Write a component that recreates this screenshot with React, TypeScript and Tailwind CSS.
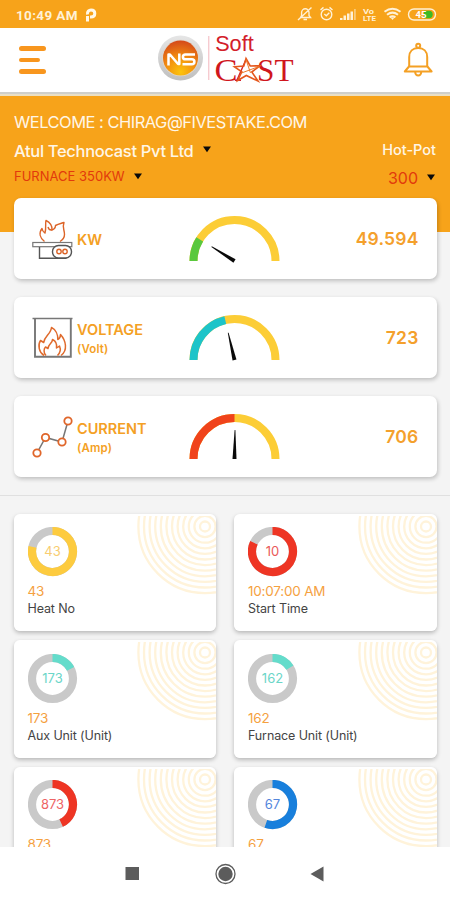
import React from "react";

const INTER = "font-['Inter','Liberation_Sans',sans-serif]";

function polar(cx: number, cy: number, r: number, deg: number) {
  const a = ((deg - 90) * Math.PI) / 180;
  return `${(cx + r * Math.cos(a)).toFixed(2)} ${(cy + r * Math.sin(a)).toFixed(2)}`;
}

function arc(cx: number, cy: number, r: number, from: number, to: number) {
  return `M${polar(cx, cy, r, from)}A${r} ${r} 0 ${to - from > 180 ? 1 : 0} 1 ${polar(cx, cy, r, to)}`;
}

function StatusIcons() {
  return (
    <svg className="overflow-visible" width="142" height="20" viewBox="0 0 142 20" fill="none" stroke="#fff1d6" strokeWidth="1.4">
      <path d="M3.500 13.500h10l-1.500-2V8.500a3.700 3.700 0 0 0-7.400 0v3zM6.500 15.500h3.500M1 16L14.500 3.500" />
      <circle cx="29.500" cy="10.500" r="5.300" />
      <path d="M27.300 10l2 1.800 3-3M23.500 6l3-2.600M35.500 6l-3-2.600" />
      <g stroke="none" fill="#fff1d6">
        <path d="M43 16v-2h2.500v2zM46.500 16v-4.500h2.500v4.500zM50 16v-6.500h2.500V16zM53.500 16V7.500H56V16z" />
        <path d="M57 16V5h1.800v11z" opacity=".5" />
        <text x="66" y="9.800" fontSize="8" fontWeight="700" fontFamily="Roboto" textLength="11" lengthAdjust="spacingAndGlyphs">Vo</text>
        <text x="66" y="16.500" fontSize="8" fontWeight="700" fontFamily="Roboto" textLength="13" lengthAdjust="spacingAndGlyphs">LTE</text>
      </g>
      <path d="M87.500 7.800q8-6 16 0M90 10.700q5.500-4.200 11 0M92.600 13.400q2.900-2.200 5.800 0" strokeWidth="2" />
      <path d="M93.500 13.500h4l-2 2.600z" fill="#fff1d6" stroke="none" />
      <rect x="111.500" y="5" width="27" height="11" rx="5.500" />
      <path d="M127 6.800h5a3.700 3.700 0 0 1 0 7.400h-5z" fill="#3dba24" stroke="none" />
      <text x="118.500" y="14" fontSize="9.500" fontWeight="700" fontFamily="Roboto" fill="#fff" stroke="none">45</text>
    </svg>
  );
}

function Logo() {
  return (
    <svg className="overflow-visible" width="138" height="52" viewBox="157 36 138 52">
      <defs>
        <linearGradient id="rim" x1="0" y1="0" x2="0" y2="1">
          <stop offset="0" stopColor="#e6e6e6" />
          <stop offset="1" stopColor="#bfbfbf" />
        </linearGradient>
        <radialGradient id="orb" cx=".5" cy=".9" r=".9">
          <stop offset="0" stopColor="#fcc40c" />
          <stop offset=".5" stopColor="#f28c10" />
          <stop offset="1" stopColor="#d4491a" />
        </radialGradient>
      </defs>
      <circle cx="180.500" cy="60" r="22.500" fill="url(#rim)" />
      <circle cx="180.500" cy="60" r="18.300" fill="#dfd6cc" />
      <circle cx="180.500" cy="60" r="17.500" fill="url(#orb)" />
      <g fill="none" stroke="#fff" strokeWidth="2.500" strokeLinejoin="round">
        <path d="M168.500 67.500V56.500h1.400l8.200 9.500h1.200V55.500" />
        <path d="M195 56.500h-9.500q-2.600 0-2.600 2.400t2.600 2.400h6.300q2.600 0 2.600 2.500t-2.600 2.500H182.500" />
      </g>
      <path d="M208.800 38v44" stroke="#f3b6bd" strokeWidth="1" />
      <text x="215.200" y="53.300" fontSize="22" fontFamily="Liberation Sans" fill="#d3202a" textLength="38.500" lengthAdjust="spacingAndGlyphs">Soft</text>
      <g fontSize="32" fontFamily="Liberation Serif" fill="#d0161d">
        <text x="214.500" y="83" textLength="23" lengthAdjust="spacingAndGlyphs">C</text>
        <text x="257" y="83" textLength="36.500" lengthAdjust="spacingAndGlyphs">ST</text>
      </g>
      <path d="M235 82.300h6M246 61.500l-9 20.500" stroke="#d3202a" strokeWidth="1.400" fill="none" />
      <path d="M246 60.500l4.200 7.500 9.800-.2-8.200 6.200 6.200 9-11.700-5.500-8.600 5 4.100-8.700-7.300-5 9.300-.7z" fill="none" stroke="#e5571c" strokeWidth="1.600" />
      <path d="M246 61.500l4.500 13.500M259 68.500l-17.500 6.500" stroke="#ec7a2a" strokeWidth="1" />
    </svg>
  );
}

function Bell() {
  return (
    <svg width="30" height="36" viewBox="0 0 30 36" fill="none" stroke="#f4a024" strokeWidth="2" strokeLinejoin="round">
      <circle cx="15.200" cy="3.700" r="2" />
      <path d="M6.200 24.500V15c0-5.500 3.600-9 9-9s9 3.500 9 9v9.500" />
      <path d="M6 24.500l-4.200 5h26.800l-4.200-5z" />
      <path d="M12.200 30a3 3.500 0 0 0 6 0" />
    </svg>
  );
}

function Caret() {
  return (
    <svg width="10" height="7" viewBox="0 0 10 7">
      <path d="M1 .5h8L5 6.300z" fill="#0a0a0a" />
    </svg>
  );
}

function PotIcon() {
  return (
    <svg width="42" height="42" viewBox="0 0 42 42" fill="none" strokeWidth="1.400">
      <path d="M12.500 23.500C8 20 6.500 15 10 10.500c.5 3 1.500 3.500 3 4.500C14.500 9 13 6 14 2.500c4 1.500 6.500 5.500 6 9.500 3-1 3.500-3 3.500-4.500 3-1.500 5.500-2 8.500-3-2 5 .5 7 .5 12 0 3.500-2 5.500-4.500 7" stroke="#dc6428" strokeLinejoin="round" />
      <path d="M20 12q-3 .500-4-3" stroke="#dc6428" />
      <rect x=".8" y="24.500" width="39" height="4.200" stroke="#777" strokeWidth="1.200" fill="#fff" />
      <path d="M7.500 29v11.200h27" stroke="#555" />
      <rect x="20.500" y="27.500" width="19" height="12.500" rx="6" stroke="#555" fill="#fff" />
      <circle cx="27" cy="33.500" r="2.200" stroke="#dc6428" />
      <circle cx="33" cy="33.500" r="2.200" stroke="#dc6428" />
    </svg>
  );
}

function FireBoxIcon() {
  return (
    <svg width="42" height="42" viewBox="0 0 42 42" fill="none">
      <path d="M.5 1.500h40" stroke="#777" strokeWidth="1.500" />
      <path d="M3 1.500v38.200h35.800V1.500" stroke="#777" strokeWidth="1.900" />
      <path d="M12 38.500C7 35.500 5.500 28 8.500 23.500l3.200 2C12.500 19 19 17 19.500 10.500c4 2 6.500 7 6.300 12 2.200-1 2.700-3 2.700-5 5.500 6 7.500 16 .5 21" stroke="#df6a2c" strokeWidth="1.500" strokeLinejoin="round" />
      <path d="M14 38.500c-3-3-2-7-.5-8.500l2.500 1.500c0-4.500 4.500-5 4.500-9 4 2 4.500 5.500 4 8.500l3-2c1.500 3.500.5 7-2 9.500" stroke="#df6a2c" strokeWidth="1.500" strokeLinejoin="round" />
    </svg>
  );
}

function LineChartIcon() {
  return (
    <svg width="42" height="42" viewBox="0 0 42 42" fill="#fff">
      <path d="M5 37L13.500 21.500 30 26 36 5" fill="none" stroke="#777" strokeWidth="1.500" />
      <g stroke="#e0662a" strokeWidth="1.800">
        <circle cx="5" cy="37" r="3.700" />
        <circle cx="13.500" cy="21.500" r="3.700" />
        <circle cx="30" cy="26" r="3.700" />
        <circle cx="36" cy="5" r="3.700" />
      </g>
    </svg>
  );
}

function Gauge({ split, color, needle, length }: { split: number; color: string; needle: number; length: number }) {
  return (
    <svg width="92" height="48" viewBox="0 0 92 48">
      <path d={arc(46.5, 46, 41, -90, 90)} fill="none" stroke="#fccd36" strokeWidth="8" />
      <path d={arc(46.5, 46, 41, -90, split)} fill="none" stroke={color} strokeWidth="8" />
      <path d={`M44.500 46L46.100 ${46 - length}h.8L48.500 46z`} fill="#0a0a0a" transform={`rotate(${needle} 46.500 46)`} />
    </svg>
  );
}

type MeterProps = {
  icon: React.ReactNode;
  name: string;
  unit?: string;
  value: string;
  gauge: React.ReactNode;
};

function Meter({ icon, name, unit, value, gauge }: MeterProps) {
  return (
    <div className="flex h-[81px] items-center rounded-[7px] bg-white px-[18px] shadow-[1px_2px_4px_rgba(0,0,0,0.22)]">
      <div className="w-[42px] shrink-0">{icon}</div>
      <div className="ml-[3.500px] w-[110.500px] shrink-0 pt-[2px] text-[#f4a024]">
        <div className="text-[14.500px] leading-[18px] font-semibold">{name}</div>
        {unit && <div className="mt-[2px] text-[11.500px] leading-[16px] font-semibold tracking-[0.150px]">{unit}</div>}
      </div>
      <div className="w-[92px] shrink-0">{gauge}</div>
      <div className="ml-auto pt-[2px] text-[17.500px] font-semibold tracking-[0.200px] text-[#f4a02c]">{value}</div>
    </div>
  );
}

function Rings() {
  return (
    <svg className="absolute right-0 top-[2px]" width="80" height="80" viewBox="0 0 80 80" fill="none" stroke="#fff3da" strokeWidth="2.300">
      {[5, 10.6, 16.2, 21.8, 27.4, 33, 38.6, 44.2, 49.8, 55.4, 61, 66.600].map((r) => (
        <circle key={r} cx="69" cy="10.500" r={r} />
      ))}
    </svg>
  );
}

type TileProps = { count: string; value: string; label: string; color: string; textColor: string; from: number; to: number };

function Tile({ count, value, label, color, textColor, from, to }: TileProps) {
  return (
    <div className="relative h-[117.500px] overflow-hidden rounded-[6px] bg-white pl-[14px] pt-[13.500px]">
      <Rings />
      <svg className="block" width="50" height="50" viewBox="0 0 50 50">
        <circle cx="24.500" cy="24.500" r="20.500" fill="none" stroke="#c9c9c9" strokeWidth="8.200" />
        <path d={arc(24.5, 24.5, 20.5, from, to)} fill="none" stroke={color} strokeWidth="8.200" />
        <text x="24.500" y="29.200" textAnchor="middle" fontSize="13" fontFamily="Inter" fill={textColor}>
          {count}
        </text>
      </svg>
      <div className="mt-[5px] text-[13.500px] leading-[18px] tracking-[-0.200px] text-[#f5a13f]">{value}</div>
      <div className="text-[12.500px] leading-[18px] tracking-[-0.120px] text-[#444]">{label}</div>
    </div>
  );
}

const tiles: TileProps[] = [
  { count: "43", value: "43", label: "Heat No", color: "#fdcb3f", textColor: "#f8cd70", from: 0, to: 283 },
  { count: "10", value: "10:07:00 AM", label: "Start Time", color: "#ee3524", textColor: "#ea5a5a", from: 0, to: 295 },
  { count: "173", value: "173", label: "Aux Unit (Unit)", color: "#64dccb", textColor: "#6bd6c8", from: 0, to: 62 },
  { count: "162", value: "162", label: "Furnace Unit (Unit)", color: "#64dccb", textColor: "#6bd6c8", from: 0, to: 58 },
  { count: "873", value: "873", label: "", color: "#ee3524", textColor: "#ee6565", from: 0, to: 155 },
  { count: "67", value: "67", label: "", color: "#187fdc", textColor: "#5486dc", from: 0, to: 199 },
];

export default function App() {
  return (
    <div className={`flex h-[900px] w-[450px] flex-col overflow-hidden bg-[#f4f4f4] ${INTER}`}>
      <div className="flex h-[28px] shrink-0 items-center bg-[#f7a31a] pl-[16px] pr-[11px] text-[#fff1d6]">
        <span className="pt-[2px] font-['Roboto',sans-serif] text-[13.500px] font-bold tracking-[0.350px]">10:49 AM</span>
        <svg className="ml-[7px] mt-px" width="12" height="14" viewBox="0 0 12 14" fill="none" stroke="#fff8e8" strokeWidth="3">
          <path d="M2.500 13.500V8M2.500 6.500C2 3.500 4 2 6 2c2.400 0 3.800 1.500 3.800 3.500S8.300 9 6 9H5" />
        </svg>
        <div className="ml-auto">
          <StatusIcons />
        </div>
      </div>

      <header className="flex h-[64px] shrink-0 items-center justify-between bg-white pl-[19px] pr-[17px]">
        <div className="flex w-[124px] flex-col gap-[7px]">
          <div className="h-[4.500px] w-[27px] rounded-full bg-[#f8961e]" />
          <div className="h-[4.500px] w-[21px] rounded-full bg-[#f8961e]" />
          <div className="h-[4.500px] w-[27px] rounded-full bg-[#f8961e]" />
        </div>
        <div className="mr-auto ml-[14px]">
          <Logo />
        </div>
        <Bell />
      </header>
      <div className="h-[2px] shrink-0 bg-[#cfcfca]" />
      <div className="h-[2px] shrink-0 bg-[#eadfc4]" />

      <div className="h-[136px] shrink-0 bg-[#f7a31a] px-[14px] pt-[16px] text-[#fff6e6]">
        <div className="h-[21px] whitespace-nowrap text-[16.500px] leading-[21px] tracking-[-0.510px]">WELCOME : CHIRAG@FIVESTAKE.COM</div>
        <div className="mt-[7px] flex h-[22px] items-center">
          <span className="whitespace-nowrap text-[16.500px] font-medium tracking-[-0.320px]">Atul Technocast Pvt Ltd</span>
          <span className="mb-[3px] ml-[8px] flex"><Caret /></span>
          <span className="mb-[3px] ml-auto text-[14.500px] font-medium">Hot-Pot</span>
        </div>
        <div className="mt-[3px] flex h-[22px] items-center text-[#e23a0c]">
          <span className="mt-px whitespace-nowrap text-[13px]">FURNACE 350KW</span>
          <span className="ml-[8px] flex"><Caret /></span>
          <span className="ml-auto mt-[4px] text-[16px]">300</span>
          <span className="ml-[8px] mt-[2px] flex"><Caret /></span>
        </div>
      </div>

      <div className="-mt-[34px] flex shrink-0 flex-col gap-[18px] px-[13.500px]">
        <Meter icon={<PotIcon />} name="KW" value="49.594" gauge={<Gauge split={-58} color="#5ac83e" needle={-58} length={27} />} />
        <Meter icon={<FireBoxIcon />} name="VOLTAGE" unit="(Volt)" value="723" gauge={<Gauge split={-13} color="#1dc4c9" needle={-13} length={28} />} />
        <Meter icon={<LineChartIcon />} name="CURRENT" unit="(Amp)" value="706" gauge={<Gauge split={0} color="#f0431b" needle={1} length={29} />} />
      </div>

      <div className="mt-[17.500px] h-px shrink-0 bg-[#e0e0e0]" />

      <main className="min-h-0 flex-1 overflow-hidden px-[13.500px] pt-[18px]">
        <div className="grid grid-cols-2 gap-x-[18px] gap-y-[9px]">
          {tiles.map((t) => (
            <div key={t.count} className="rounded-[6px] shadow-[0_2px_4px_rgba(0,0,0,0.25)]">
              <Tile {...t} />
            </div>
          ))}
        </div>
      </main>

      <nav className="flex h-[53px] shrink-0 items-center justify-center bg-white">
        <svg width="202" height="24" viewBox="0 0 202 24" fill="#5c5c5c">
          <rect x="1.500" y="5" width="13.500" height="13" />
          <circle cx="101.500" cy="12" r="7.200" />
          <circle cx="101.500" cy="12" r="9.500" fill="none" stroke="#5c5c5c" strokeWidth="1.300" />
          <path d="M186.500 12l13-7.500v15z" />
        </svg>
      </nav>
    </div>
  );
}
